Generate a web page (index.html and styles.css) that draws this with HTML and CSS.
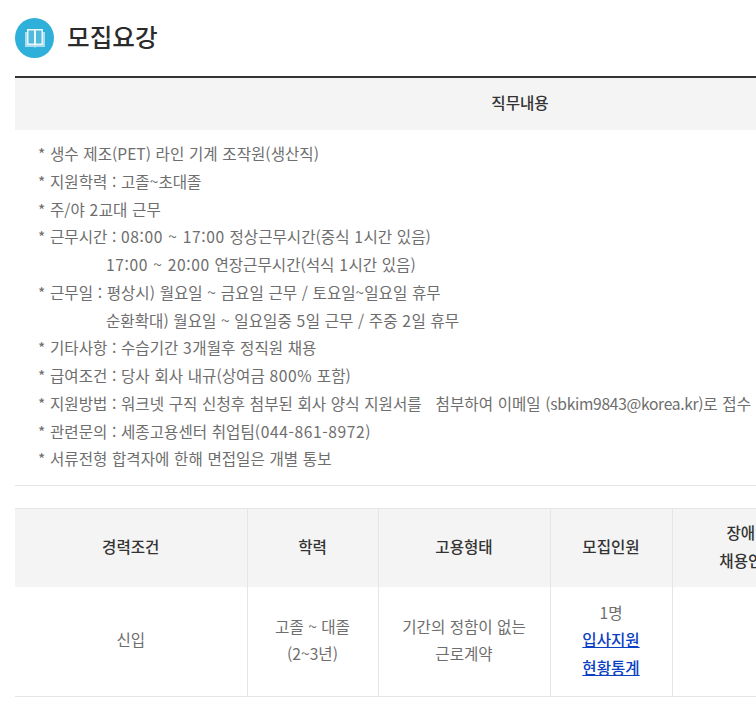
FILE: index.html
```html
<!DOCTYPE html>
<html lang="ko">
<head>
<meta charset="utf-8">
<title>모집요강</title>
<link rel="stylesheet" href="styles.css">
</head>
<body>
<div class="page">
  <h2 class="title">
    <span class="badge">
      <svg viewBox="0 0 20 19" width="20" height="19" aria-hidden="true">
        <path d="M0 3h20v15h-9l-1 1-1-1h-9z" fill="#a9dcee"/>
        <path d="M2 0h16v16h-7l-1 1-1-1h-7z" fill="#eaf6fb"/>
        <rect x="3.5" y="1.5" width="5.5" height="13" fill="#4fbade"/>
        <rect x="11" y="1.5" width="5.5" height="13" fill="#4fbade"/>
      </svg>
    </span>
    모집요강
  </h2>
  <section class="duty">
    <h3 class="duty-head">직무내용</h3>
    <div class="duty-body">
      <p>* 생수 제조(PET) 라인 기계 조작원(생산직)</p>
      <p>* 지원학력 : 고졸~초대졸</p>
      <p>* 주/야 <span class="num">2</span>교대 근무</p>
      <p>* 근무시간 : <span class="num">08:00 ~ 17:00</span> 정상근무시간(중식 <span class="num">1</span>시간 있음)</p>
      <p class="indent"><span class="num">17:00 ~ 20:00</span> 연장근무시간(석식 <span class="num">1</span>시간 있음)</p>
      <p>* 근무일 : 평상시) 월요일 ~ 금요일 근무 / 토요일~일요일 휴무</p>
      <p class="indent">순환확대) 월요일 ~ 일요일중 <span class="num">5</span>일 근무 / 주중 <span class="num">2</span>일 휴무</p>
      <p>* 기타사항 : 수습기간 <span class="num">3</span>개월후 정직원 채용</p>
      <p>* 급여조건 : 당사 회사 내규(상여금 <span class="num">800%</span> 포함)</p>
      <p>* 지원방법 : 워크넷 구직 신청후 첨부된 회사 양식 지원서를&nbsp;&nbsp; 첨부하여 이메일 <span class="mail">(sbkim9843@korea.kr)</span>로 접수</p>
      <p>* 관련문의 : 세종고용센터 취업팀<span class="num">(044-861-8972)</span></p>
      <p>* 서류전형 합격자에 한해 면접일은 개별 통보</p>
    </div>
  </section>
  <table class="info">
    <colgroup>
      <col class="c1"><col class="c2"><col class="c3"><col class="c4"><col class="c5"><col>
    </colgroup>
    <thead>
      <tr>
        <th>경력조건</th>
        <th>학력</th>
        <th>고용형태</th>
        <th>모집인원</th>
        <th>장애인<br>채용인원</th>
        <th></th>
      </tr>
    </thead>
    <tbody>
      <tr>
        <td>신입</td>
        <td>고졸 ~ 대졸<br>(2~3년)</td>
        <td>기간의 정함이 없는<br>근로계약</td>
        <td>1명<br><a href="#">입사지원<br>현황통계</a></td>
        <td></td>
        <td></td>
      </tr>
    </tbody>
  </table>
</div>
</body>
</html>
```
FILE: styles.css
```css
html, body {
  margin: 0;
  padding: 0;
  background: #fff;
  overflow: hidden;
  height: 703px;
}
body {
  font-family: "Noto Sans CJK KR", "Noto Sans", sans-serif;
  font-size: 15.6px;
  line-height: 27.75px;
  color: #6e6e6e;
}
.page {
  width: 1010px;
  margin-left: 15px;
}
.title {
  display: flex;
  align-items: center;
  gap: 13px;
  margin: 0;
  height: 76px;
  padding-bottom: 5px;
  box-sizing: border-box;
  font-size: 24.6px;
  line-height: 34px;
  font-weight: 500;
  color: #2b2b2b;
}
.badge {
  display: flex;
  align-items: center;
  justify-content: center;
  width: 39px;
  height: 40px;
  margin-top: 5px;
  border-radius: 50%;
  background: #2fb0da;
}
.duty {
  border-top: 2px solid #333;
}
.duty-head {
  margin: 0;
  height: 52px;
  line-height: 48px;
  background: #f4f4f4;
  text-align: center;
  font-size: 15.6px;
  font-weight: 500;
  color: #333;
}
.duty-body {
  padding: 10px 23px 12px;
  border-bottom: 1px solid #e5e5e5;
  word-spacing: 0.3px;
}
.duty-body p {
  margin: 0;
  white-space: nowrap;
}
.duty-body .indent {
  padding-left: 68px;
}
.num {
  letter-spacing: 0.6px;
}
.mail {
  letter-spacing: -0.3px;
}
.info {
  width: 1010px;
  margin-top: 22px;
  border-collapse: collapse;
  table-layout: fixed;
  border-top: 1px solid #e5e5e5;
  border-bottom: 1px solid #e5e5e5;
}
.c1 { width: 232px; }
.c2 { width: 131px; }
.c3 { width: 172px; }
.c4 { width: 122px; }
.c5 { width: 152px; }
.info th, .info td {
  box-sizing: border-box;
  text-align: center;
  padding: 0 0 2px;
  border-left: 1px solid #e5e5e5;
}
.info th:first-child, .info td:first-child {
  border-left: 0;
}
.info th {
  height: 78px;
  background: #f4f4f4;
  font-weight: 500;
  color: #333;
}
.info td {
  height: 110px;
}
.info a {
  color: #0b3fc4;
  font-weight: 500;
  text-decoration: underline;
}
```
